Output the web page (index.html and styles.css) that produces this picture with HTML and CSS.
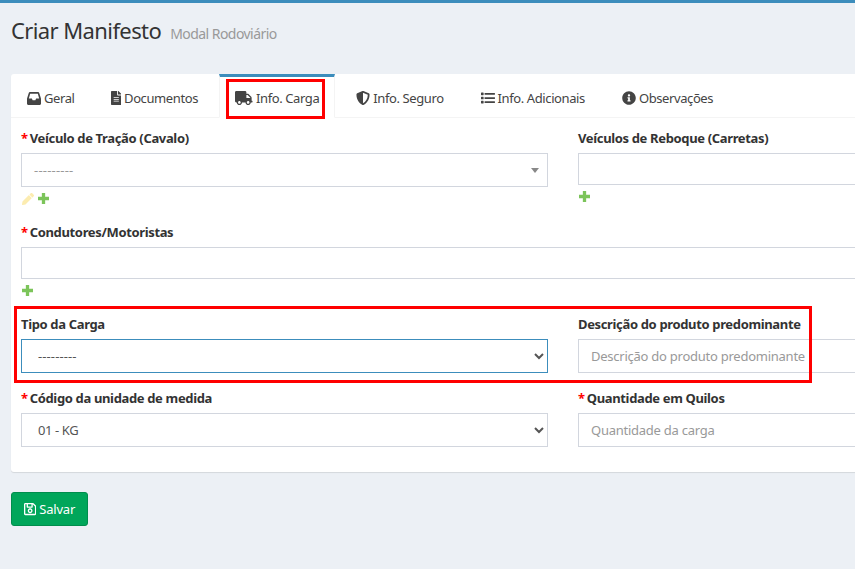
FILE: index.html
```html
<!DOCTYPE html>
<html lang="pt-BR">
<head>
<meta charset="utf-8">
<title>Criar Manifesto</title>
<link rel="stylesheet" href="styles.css">
</head>
<body>
<div class="topbar"></div>
<main class="content">
  <header class="page-head">
    <h1>Criar Manifesto</h1>
    <small>Modal Rodoviário</small>
  </header>
  <section class="card">
    <nav class="tabs">
      <a class="tab tab-first"><svg class="ic ic-inbox" viewBox="0 32 576 448" preserveAspectRatio="none"><path d="M121 32C96 32 80 44 72 64L8 240c-5 12-8 24-8 36v156c0 27 21 48 48 48h480c27 0 48-21 48-48V276c0-12-3-24-8-36L504 64c-8-20-24-32-49-32H121zM130 96h316l54 160H376l-32 64H232l-32-64H76l54-160z"/></svg>Geral</a>
      <a class="tab"><svg class="ic ic-file" viewBox="0 0 384 512"><path d="M224 136V0H24C10.7 0 0 10.7 0 24v464c0 13.3 10.7 24 24 24h336c13.3 0 24-10.7 24-24V160H248c-13.2 0-24-10.8-24-24zm64 236c0 6.6-5.4 12-12 12H108c-6.6 0-12-5.4-12-12v-8c0-6.6 5.4-12 12-12h168c6.6 0 12 5.4 12 12v8zm0-64c0 6.6-5.4 12-12 12H108c-6.6 0-12-5.4-12-12v-8c0-6.6 5.4-12 12-12h168c6.6 0 12 5.4 12 12v8zm0-72v8c0 6.6-5.4 12-12 12H108c-6.6 0-12-5.4-12-12v-8c0-6.6 5.4-12 12-12h168c6.6 0 12 5.4 12 12zm96-114.1v6.1H256V0h6.1c6.4 0 12.5 2.5 17 7l97.9 98c4.5 4.5 7 10.6 7 16.9z"/></svg>Documentos</a>
      <a class="tab active"><svg class="ic ic-truck" viewBox="0 0 640 512"><path d="M624 352h-16V243.9c0-12.7-5.1-24.9-14.1-33.9L494 110.1c-9-9-21.2-14.1-33.9-14.1H416V48c0-26.5-21.5-48-48-48H48C21.5 0 0 21.5 0 48v320c0 26.5 21.5 48 48 48h16c0 53 43 96 96 96s96-43 96-96h128c0 53 43 96 96 96s96-43 96-96h48c8.8 0 16-7.2 16-16v-32c0-8.8-7.2-16-16-16zM160 464c-26.5 0-48-21.5-48-48s21.5-48 48-48 48 21.5 48 48-21.5 48-48 48zm320 0c-26.5 0-48-21.5-48-48s21.5-48 48-48 48 21.5 48 48-21.5 48-48 48zm80-208H416V144h44.1l99.9 99.9V256z"/></svg>Info. Carga</a>
      <a class="tab"><svg class="ic ic-shield" viewBox="0 0 512 512"><path d="M466.5 83.7l-192-80a48.15 48.15 0 0 0-36.9 0l-192 80C27.7 91.1 16 108.6 16 128c0 198.5 114.5 335.7 221.5 380.3 11.8 4.9 25.1 4.9 36.9 0C360.1 472.6 496 349.3 496 128c0-19.4-11.7-36.9-29.5-44.3zM256.1 446.3l-.1-381 175.9 73.3c-3.3 151.4-82.1 261.1-175.8 307.7z"/></svg>Info. Seguro</a>
      <a class="tab"><svg class="ic ic-list" viewBox="0 0 512 512"><path d="M16 56h64a16 16 0 0 1 16 16v64a16 16 0 0 1-16 16H16a16 16 0 0 1-16-16V72a16 16 0 0 1 16-16zm0 152h64a16 16 0 0 1 16 16v64a16 16 0 0 1-16 16H16a16 16 0 0 1-16-16v-64a16 16 0 0 1 16-16zm0 152h64a16 16 0 0 1 16 16v64a16 16 0 0 1-16 16H16a16 16 0 0 1-16-16v-64a16 16 0 0 1 16-16zM144 72h352a16 16 0 0 1 16 16v32a16 16 0 0 1-16 16H144a16 16 0 0 1-16-16V88a16 16 0 0 1 16-16zm0 152h352a16 16 0 0 1 16 16v32a16 16 0 0 1-16 16H144a16 16 0 0 1-16-16v-32a16 16 0 0 1 16-16zm0 152h352a16 16 0 0 1 16 16v32a16 16 0 0 1-16 16H144a16 16 0 0 1-16-16v-32a16 16 0 0 1 16-16z"/></svg>Info. Adicionais</a>
      <a class="tab"><svg class="ic ic-info" viewBox="0 0 512 512"><path d="M256 8C119.043 8 8 119.083 8 256c0 136.997 111.043 248 248 248s248-111.003 248-248C504 119.083 392.957 8 256 8zm0 110c23.196 0 42 18.804 42 42s-18.804 42-42 42-42-18.804-42-42 18.804-42 42-42zm56 254c0 6.627-5.373 12-12 12h-88c-6.627 0-12-5.373-12-12v-24c0-6.627 5.373-12 12-12h12v-64h-12c-6.627 0-12-5.373-12-12v-24c0-6.627 5.373-12 12-12h64c6.627 0 12 5.373 12 12v100h12c6.627 0 12 5.373 12 12v24z"/></svg>Observações</a>
    </nav>
    <form class="form">
      <div class="field">
        <label><span class="req">*</span> Veículo de Tração (Cavalo)</label>
        <div class="control combo"><span>---------</span><i class="caret"></i></div>
        <div class="actions">
          <svg class="act pencil" viewBox="0 0 512 512"><path d="M497.9 142.1l-46.1 46.1c-4.7 4.7-12.3 4.7-17 0l-111-111c-4.7-4.7-4.7-12.3 0-17l46.1-46.1c18.7-18.7 49.1-18.7 67.9 0l60.1 60.1c18.8 18.7 18.8 49.1 0 67.9zM284.2 99.8L21.6 362.4.4 483.9c-2.9 16.4 11.4 30.6 27.8 27.8l121.5-21.3 262.6-262.6c4.7-4.7 4.7-12.3 0-17l-111-111c-4.8-4.7-12.4-4.7-17.1 0z"/></svg>
          <svg class="act plus" viewBox="0 0 12 12"><path d="M4.2 0h3.6v4.2H12v3.6H7.8V12H4.2V7.8H0V4.2h4.2z"/></svg>
        </div>
      </div>
      <div class="field">
        <label>Veículos de Reboque (Carretas)</label>
        <div class="control multi"></div>
        <div class="actions">
          <svg class="act plus" viewBox="0 0 12 12"><path d="M4.2 0h3.6v4.2H12v3.6H7.8V12H4.2V7.8H0V4.2h4.2z"/></svg>
        </div>
      </div>
      <div class="field wide">
        <label><span class="req">*</span> Condutores/Motoristas</label>
        <div class="control multi"></div>
        <div class="actions">
          <svg class="act plus" viewBox="0 0 12 12"><path d="M4.2 0h3.6v4.2H12v3.6H7.8V12H4.2V7.8H0V4.2h4.2z"/></svg>
        </div>
      </div>
      <div class="field">
        <label>Tipo da Carga</label>
        <select class="control focused"><option>---------</option></select>
      </div>
      <div class="field">
        <label>Descrição do produto predominante</label>
        <input class="control" type="text" placeholder="Descrição do produto predominante">
      </div>
      <div class="field">
        <label><span class="req">*</span> Código da unidade de medida</label>
        <select class="control"><option>01 - KG</option></select>
      </div>
      <div class="field">
        <label><span class="req">*</span> Quantidade em Quilos</label>
        <input class="control" type="text" placeholder="Quantidade da carga">
      </div>
    </form>
  </section>
  <button class="btn-save" type="button"><svg class="ic-save" viewBox="0 0 448 512"><path d="M433.941 129.941l-83.882-83.882A48 48 0 0 0 316.118 32H48C21.49 32 0 53.49 0 80v352c0 26.51 21.49 48 48 48h352c26.51 0 48-21.49 48-48V163.882a48 48 0 0 0-14.059-33.941zM272 80v80H144V80h128zm122 352H54a6 6 0 0 1-6-6V86a6 6 0 0 1 6-6h42v104c0 13.255 10.745 24 24 24h176c13.255 0 24-10.745 24-24V83.882l78.243 78.243a6 6 0 0 1 1.757 4.243V426a6 6 0 0 1-6 6zM224 232c-48.523 0-88 39.477-88 88s39.477 88 88 88 88-39.477 88-88-39.477-88-88-88zm0 128c-22.056 0-40-17.944-40-40s17.944-40 40-40 40 17.944 40 40-17.944 40-40 40z"/></svg>Salvar</button>
</main>
<div class="mark mark-tab"></div>
<div class="mark mark-row"></div>
</body>
</html>
```
FILE: styles.css
```css
* { box-sizing: border-box; }
html, body { height: 100%; overflow: hidden; }
body {
  margin: 0;
  position: relative;
  background: #ecf0f5;
  color: #333;
  font-family: "Noto Sans", "Liberation Sans", sans-serif;
  font-size: 13px;
  line-height: 20px;
  letter-spacing: -0.35px;
}
.topbar { height: 3px; background: #3c8dbc; }
.content { width: 1115px; padding: 0 0 0 11px; }

.page-head { display: flex; align-items: baseline; gap: 9px; height: 71px; padding-top: 12px; }
.page-head h1 { margin: 0; font-size: 22px; font-weight: 400; line-height: 30px; color: #333; letter-spacing: -0.6px; }
.page-head small { font-size: 14px; color: #999; letter-spacing: -0.55px; }

.card {
  width: 1104px;
  height: 398px;
  background: #fff;
  border-radius: 3px;
  box-shadow: 0 1px 1px rgba(0, 0, 0, .1);
}
.tabs { display: flex; height: 44px; border-bottom: 1px solid #f4f4f4; }
.tab {
  display: flex;
  align-items: center;
  height: 44px;
  margin-right: 5px;
  padding: 5px 15px 0;
  border: 1px solid transparent;
  border-top: 0;
  color: #444;
  letter-spacing: -0.4px;
}
.tab-first { padding-right: 14px; }
.tab.active {
  background: #fff;
  border-color: #f4f4f4;
  border-bottom-color: #fff;
  border-top: 3px solid #3c8dbc;
  padding-top: 2px;
}
.ic { height: 14px; margin-right: 3px; fill: #444; flex: none; }
.ic-inbox { width: 14px; height: 13px; }
.ic-truck { margin-right: 3.5px; }

.form {
  display: grid;
  grid-template-columns: 527px 527px;
  column-gap: 30px;
  padding: 10px 10px 0;
}
.field { margin-bottom: 15px; }
.wide { grid-column: 1 / -1; }
.field label { display: block; height: 20px; margin-bottom: 5px; font-weight: 700; color: #333; white-space: nowrap; }
.req { color: #f00; margin-right: -1px; }
.control {
  display: block;
  width: 100%;
  height: 34px;
  padding: 6px 12px;
  border: 1px solid #d2d6de;
  border-radius: 0;
  background-color: #fff;
  color: #555;
  font-family: inherit;
  font-size: 13px;
  line-height: 20px;
  letter-spacing: -0.25px;
  outline: 0;
}
select.control { letter-spacing: -0.4px; }
select.focused { border-color: #3c8dbc; letter-spacing: 0.1px; }
.control::placeholder { color: #999; opacity: 1; }
.multi { height: 32px; }
.combo { display: flex; align-items: center; justify-content: space-between; color: #999; padding-right: 8px; letter-spacing: 0.2px; }
.caret { width: 0; height: 0; border: 4px solid transparent; border-top: 5px solid #888; border-bottom: 0; }
.actions { display: flex; align-items: center; gap: 4px; height: 20px; padding: 3px 0 0 1px; }
.act { height: 12px; flex: none; }
.pencil { fill: #fcecb0; }
.plus { fill: #7cc45a; height: 11px; }

.btn-save {
  display: flex;
  align-items: center;
  height: 34px;
  width: 77px;
  margin-top: 20px;
  padding: 0 12px;
  border: 1px solid #008d4c;
  border-radius: 3px;
  background: #00a65a;
  color: #fff;
  font-family: inherit;
  font-size: 13px;
  letter-spacing: -0.2px;
}
.ic-save { height: 14px; margin-right: 3px; fill: #fff; flex: none; }

.mark { position: absolute; border: 3px solid #f00; }
.mark-tab { left: 226px; top: 79px; width: 99px; height: 40px; }
.mark-row { left: 14px; top: 306px; width: 798px; height: 77px; }
```
